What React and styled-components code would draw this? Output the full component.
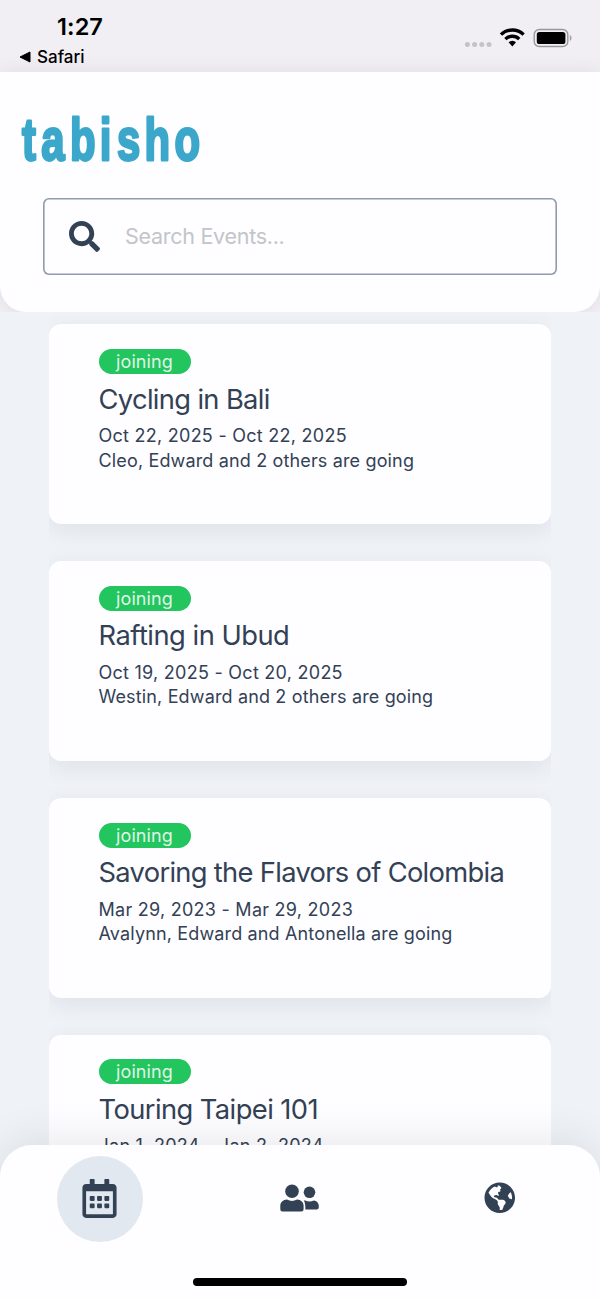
import React from "react";
import styled, { createGlobalStyle } from "styled-components";
import { FaSearch, FaRegCalendarAlt, FaGlobeAmericas } from "react-icons/fa";

const GlobalStyle = createGlobalStyle`
  * { box-sizing: border-box; }
  body {
    margin: 0;
    background: #eff3f8;
    color: #334155;
    font-family: Inter, "Liberation Sans", sans-serif;
  }
`;

const Screen = styled.div`
  width: 600px;
  height: 1298px;
  display: flex;
  flex-direction: column;
  overflow: hidden;
  background: #eff3f8;
`;

const Top = styled.div`
  flex: none;
  height: 312px;
  display: flex;
  flex-direction: column;
  overflow: hidden;
  background: #f1eff3;
`;

const StatusBar = styled.div`
  flex: none;
  height: 72px;
  display: flex;
  justify-content: space-between;
  color: #000;
`;

const StatusLeft = styled.div`
  display: flex;
  flex-direction: column;
  padding: 14px 0 0 19px;
`;

const Clock = styled.span`
  padding-left: 38px;
  font-size: 23.5px;
  line-height: 26px;
  font-weight: 600;
  letter-spacing: 0.1px;
`;

const BackLink = styled.span`
  display: flex;
  align-items: center;
  gap: 6px;
  margin-top: 7px;
  font-size: 17px;
  line-height: 20px;
  font-weight: 500;
`;

const StatusRight = styled.div`
  display: flex;
  align-items: flex-start;
  padding: 28px 28px 0 0;
`;

const Header = styled.header`
  flex: none;
  height: 240px;
  padding: 36px 43px 0;
  background: #fefdff;
  border-radius: 0 0 26px 26px;
  box-shadow: 0 0 20px rgba(0, 0, 0, 0.08);
`;

const Logo = styled.svg`
  display: block;
  overflow: visible;
  margin-left: -23px;
`;

const SearchBox = styled.div`
  display: flex;
  align-items: center;
  gap: 25px;
  height: 77px;
  margin-top: 30px;
  padding-left: 26px;
  box-shadow: inset 0 0 0 1.6px #909cad;
  border-radius: 6px;
`;

const Placeholder = styled.span`
  margin-top: -1px;
  font-size: 21.5px;
  letter-spacing: -0.28px;
  font-weight: 400;
  color: #c3c5c8;
`;

const EventList = styled.main`
  flex: none;
  height: 864px;
  overflow: hidden;
`;

const EventItem = styled.div`
  height: 236.8px;
  width: 502px;
  margin-left: 49px;
  padding-top: 12.4px;
  overflow: hidden;
`;

const Card = styled.article`
  height: 200px;
  padding: 24.6px 0 0 49.5px;
  border-radius: 12px;
  background: #fefdff;
  box-shadow: 0 6px 24px rgba(20, 20, 40, 0.08);
`;

const Pill = styled.div`
  width: 92px;
  height: 25px;
  border-radius: 13px;
  background: #22c55e;
  color: #e0f5e8;
  font-size: 18px;
  line-height: 25px;
  letter-spacing: 0.1px;
  text-align: center;
`;

const Title = styled.h2`
  margin: 6.6px 0 5.4px;
  font-size: 27.3px;
  line-height: 38px;
  font-weight: 400;
  white-space: nowrap;
  letter-spacing: ${(p) => p.$spacing}px;
`;

const Detail = styled.p`
  margin: 0;
  font-size: 18px;
  line-height: 24.6px;
  letter-spacing: ${(p) => (p.$dates ? 0.26 : 0.15)}px;
  white-space: nowrap;
`;

const BottomBar = styled.nav`
  flex: none;
  position: relative;
  height: 153px;
  margin-top: -31px;
  border-radius: 32px 32px 0 0;
  background: #fefdff;
  box-shadow: 0 0 48px rgba(0, 0, 0, 0.11);
  display: flex;
  flex-direction: column;
  align-items: center;
  justify-content: space-between;
  padding: 10.5px 0 12px;
`;

const Tabs = styled.div`
  width: 100%;
  display: flex;
  justify-content: space-between;
  padding: 0 57px;
`;

const Tab = styled.div`
  width: 86px;
  height: 86px;
  padding: 0 1px 1px 0;
  border-radius: 50%;
  display: flex;
  align-items: center;
  justify-content: center;
  background: ${(p) => (p.$active ? "#e2e8f0" : "transparent")};
`;

const HomeIndicator = styled.div`
  width: 214px;
  height: 8px;
  border-radius: 4px;
  background: #000;
`;

const events = [
  { title: "Cycling in Bali", spacing: -0.65, dates: "Oct 22, 2025 - Oct 22, 2025", people: "Cleo, Edward and 2 others are going" },
  { title: "Rafting in Ubud", spacing: -0.5, dates: "Oct 19, 2025 - Oct 20, 2025", people: "Westin, Edward and 2 others are going" },
  { title: "Savoring the Flavors of Colombia", spacing: -0.68, dates: "Mar 29, 2023 - Mar 29, 2023", people: "Avalynn, Edward and Antonella are going" },
  { title: "Touring Taipei 101", spacing: -0.57, dates: "Jan 1, 2024 - Jan 2, 2024", people: "" },
];

function StatusIcons() {
  return (
    <svg width="108" height="20" viewBox="0 0 108 20">
      <g fill="#c3c3c6">
        <circle cx="3.4" cy="16.4" r="2.5" />
        <circle cx="10.6" cy="16.4" r="2.5" />
        <circle cx="17.8" cy="16.4" r="2.5" />
        <circle cx="25" cy="16.4" r="2.5" />
      </g>
      <g fill="none" stroke="#000" strokeWidth="3.4">
        <path d="M37 6.6a16.2 16.2 0 0 1 22.6 0" />
        <path d="M41.4 11.1a9.9 9.9 0 0 1 13.8 0" />
      </g>
      <path d="M44.6 14.2a5.3 5.3 0 0 1 7.4 0L48.3 18.4Z" />
      <rect x="70.2" y="1.5" width="33.6" height="17" rx="5" fill="none" stroke="#98989b" strokeWidth="1.4" />
      <rect x="72.8" y="4" width="28.6" height="12" rx="2.6" />
      <path d="M105.8 7v6c2.3-1 2.3-5 0-6Z" fill="#a2a2a5" />
    </svg>
  );
}

function PeopleIcon() {
  return (
    <svg width="39" height="28" viewBox="0 0 39 28" fill="currentColor">
      <circle cx="12" cy="7.3" r="6.8" />
      <circle cx="29.5" cy="8.3" r="5.8" />
      <path d="M7 15.6Q12 18.4 17 15.6C21 15.8 23.6 18.4 23.6 22V25.2Q23.6 27.4 21.4 27.4H2.4Q.3 27.4.3 25.2V22C.3 18.4 3 15.8 7 15.6Z" />
      <path d="M23.8 16.4H25.2Q29.5 18.7 33.8 16.4C36.8 16.8 38.8 19 38.8 22V23.6Q38.8 25.4 37 25.4H25.4C25.3 21.5 25.3 18.8 23.8 16.4Z" />
    </svg>
  );
}

export default function App() {
  return (
    <Screen>
      <GlobalStyle />
      <Top>
        <StatusBar>
          <StatusLeft>
            <Clock>1:27</Clock>
            <BackLink>
              <svg width="12" height="12" viewBox="0 0 12 12">
                <path d="M1 6 11 1v10Z" stroke="#000" strokeLinejoin="round" />
              </svg>
              Safari
            </BackLink>
          </StatusLeft>
          <StatusRight>
            <StatusIcons />
          </StatusRight>
        </StatusBar>
        <Header>
          <Logo width="190" height="60" viewBox="0 0 190 60">
            <text
              transform="translate(0 51.8) scale(0.71 1)"
              x="3 30 70.5 112.5 136.5 175.5 217.5"
              y="0"
              fontFamily="'Liberation Sans', Arial, sans-serif"
              fontSize="59"
              fontWeight="700"
              fill="#3ba7cb"
              stroke="#3ba7cb"
              strokeWidth="2.8"
              strokeLinejoin="round"
            >
              tabisho
            </text>
          </Logo>
          <SearchBox>
            <FaSearch size={31} />
            <Placeholder>Search Events...</Placeholder>
          </SearchBox>
        </Header>
      </Top>
      <EventList>
        {events.map((e) => (
          <EventItem key={e.title}>
            <Card>
              <Pill>joining</Pill>
              <Title $spacing={e.spacing}>{e.title}</Title>
              <Detail $dates>{e.dates}</Detail>
              <Detail>{e.people}</Detail>
            </Card>
          </EventItem>
        ))}
      </EventList>
      <BottomBar>
        <Tabs>
          <Tab $active>
            <FaRegCalendarAlt size={39} />
          </Tab>
          <Tab>
            <PeopleIcon />
          </Tab>
          <Tab>
            <FaGlobeAmericas size={31.5} />
          </Tab>
        </Tabs>
        <HomeIndicator />
      </BottomBar>
    </Screen>
  );
}
